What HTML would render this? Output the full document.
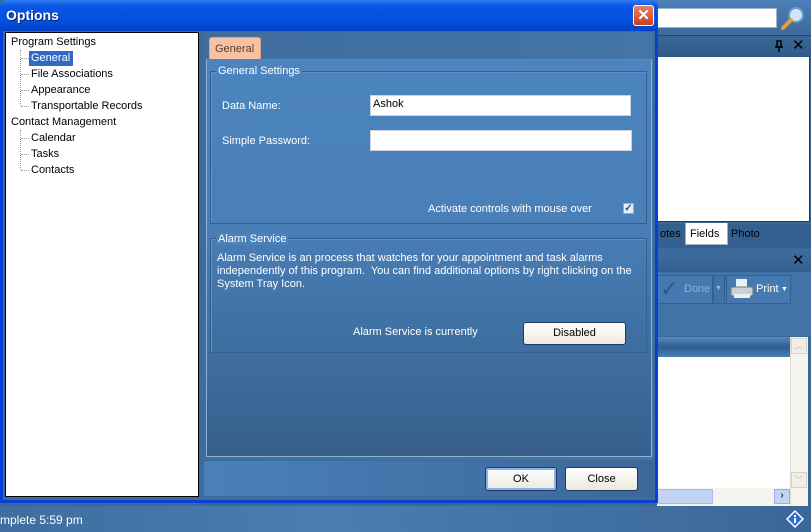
<!DOCTYPE html>
<html><head><meta charset="utf-8"><style>
*{margin:0;padding:0;box-sizing:border-box}
body{width:811px;height:532px;overflow:hidden;position:relative;background:#3c6898;font-family:"Liberation Sans",sans-serif;font-size:11px;color:#fff}
.a{position:absolute}
.t{position:absolute;white-space:nowrap}
</style></head><body>
<div class="a" style="left:640px;top:0;width:171px;height:35px;background:linear-gradient(#4b7fb6,#3d6a9c)"></div>
<div class="a" style="left:655px;top:8px;width:122px;height:20px;background:#fff;border:1px solid #9fb5cf"></div>
<svg class="a" style="left:780px;top:5px" width="26" height="26"><circle cx="16" cy="10" r="7" fill="#cfe6f7" stroke="#6a9cc8" stroke-width="2"/><line x1="11" y1="15" x2="3" y2="23" stroke="#e0a040" stroke-width="4" stroke-linecap="round"/></svg>
<div class="a" style="left:657px;top:35px;width:154px;height:22px;background:linear-gradient(#3a6796,#2f5a88);border-top:1px solid #25466b"></div>
<svg class="a" style="left:774px;top:40px" width="10" height="12"><rect x="3" y="1" width="4" height="6" fill="none" stroke="#000" stroke-width="1.5"/><line x1="1" y1="7" x2="9" y2="7" stroke="#000" stroke-width="1.5"/><line x1="5" y1="7" x2="5" y2="12" stroke="#000" stroke-width="1.5"/></svg>
<div class="t" style="left:792px;top:36px;font-size:15px;color:#000">✕</div>
<div class="a" style="left:657px;top:57px;width:153px;height:165px;background:#fff;border-right:1px solid #1f3a5c;border-bottom:1px solid #1f3a5c"></div>
<div class="a" style="left:657px;top:224px;width:154px;height:24px;background:#34608f"></div>
<div class="t" style="left:660px;top:228px;color:#000">otes</div>
<div class="a" style="left:685px;top:223px;width:43px;height:22px;background:#fff;border:1px solid #a0b0c0;border-top:none"></div>
<div class="t" style="left:690px;top:228px;color:#000">Fields</div>
<div class="t" style="left:731px;top:228px;color:#000">Photo</div>
<div class="a" style="left:657px;top:250px;width:154px;height:22px;background:linear-gradient(#3e6c9e,#34608f)"></div>
<div class="t" style="left:792px;top:251px;font-size:15px;color:#000">✕</div>
<div class="a" style="left:657px;top:272px;width:154px;height:64px;background:#4173a6"></div>
<div class="a" style="left:657px;top:275px;width:56px;height:29px;border:1px solid #35618f;background:#4679af"></div>
<div class="t" style="left:660px;top:276px;font-size:22px;color:#2d5a88">✓</div>
<div class="t" style="left:684px;top:283px;color:#8fb0d2">Done</div>
<div class="a" style="left:713px;top:275px;width:12px;height:29px;border:1px solid #35618f"></div>
<div class="t" style="left:715px;top:285px;font-size:7px;color:#9fbad7">▼</div>
<div class="a" style="left:726px;top:275px;width:65px;height:29px;border:1px solid #35618f;background:#4679af"></div>
<svg class="a" style="left:729px;top:277px" width="26" height="24"><rect x="7" y="2" width="11" height="9" fill="#e8f0ff"/><rect x="2" y="10" width="22" height="9" rx="2" fill="#c8d0d8" stroke="#777"/><rect x="5" y="17" width="16" height="4" fill="#eee"/></svg>
<div class="t" style="left:756px;top:283px">Print</div>
<div class="t" style="left:781px;top:286px;font-size:7px">▼</div>
<div class="a" style="left:657px;top:337px;width:133px;height:20px;background:linear-gradient(#5589c0,#2f5e92 50%,#4a7fb5)"></div>
<div class="a" style="left:657px;top:357px;width:133px;height:131px;background:#fff"></div>
<div class="a" style="left:790px;top:337px;width:18px;height:171px;background:#f4f3ee;border-left:1px solid #e0ddd0"></div>
<div class="a" style="left:791px;top:338px;width:16px;height:16px;background:#f0eee6;border:1px solid #d8d4c4;color:#c0c0c0;font-size:9px;text-align:center">︿</div>
<div class="a" style="left:791px;top:472px;width:16px;height:16px;background:#f0eee6;border:1px solid #d8d4c4;color:#c0c0c0;font-size:9px;text-align:center">﹀</div>
<div class="a" style="left:657px;top:488px;width:133px;height:18px;background:#f4f3ee"></div>
<div class="a" style="left:657px;top:489px;width:56px;height:15px;background:#c3d3f3;border:1px solid #a8bde8"></div>
<div class="a" style="left:774px;top:489px;width:16px;height:15px;background:#c3d3f3;border:1px solid #98aee0;color:#335;font-size:10px;text-align:center;font-weight:bold">›</div>
<div class="a" style="left:0;top:506px;width:811px;height:26px;background:linear-gradient(90deg,#3f6d9f,#4a7db2 40%,#3a6797)"></div>
<div class="t" style="left:0;top:513px;font-size:12px">mplete 5:59 pm</div>
<svg class="a" style="left:786px;top:510px" width="18" height="18"><path d="M9 1 17 9 9 17 1 9Z" fill="#2a6fd6" stroke="#fff" stroke-width="1.5"/><rect x="8" y="8" width="2" height="5" fill="#fff"/><rect x="8" y="5" width="2" height="2" fill="#fff"/></svg>
<div class="a" style="left:0;top:0;width:658px;height:503px;background:#0a3fd6;border-radius:6px 6px 0 0"></div>
<div class="a" style="left:0;top:0;width:658px;height:31px;background:linear-gradient(#2f7df5,#0a56e4 20%,#0350dc 70%,#0241c8);border-radius:6px 6px 0 0"></div>
<div class="t" style="left:6px;top:7px;font-size:14px;font-weight:bold;text-shadow:1px 1px #0a2470">Options</div>
<div class="a" style="left:633px;top:5px;width:21px;height:21px;background:linear-gradient(#e8806a,#cc3e1c);border:1px solid #fff;border-radius:3px;color:#fff;font-size:15px;text-align:center;line-height:19px;font-weight:bold">✕</div>
<div class="a" style="left:3px;top:31px;width:652px;height:469px;background:#3c6b9c"></div>
<div class="a" style="left:5px;top:32px;width:194px;height:465px;background:#fff;border:1px solid #000"></div>
<div class="t" style="left:11px;top:36px;color:#000">Program Settings</div>
<div class="a" style="left:20px;top:50px;width:0;height:56px;border-left:1px dotted #999"></div>
<div class="a" style="left:20px;top:130px;width:0;height:40px;border-left:1px dotted #999"></div>
<div class="a" style="left:21px;top:58px;width:8px;border-top:1px dotted #999"></div>
<div class="a" style="left:21px;top:74px;width:8px;border-top:1px dotted #999"></div>
<div class="a" style="left:21px;top:90px;width:8px;border-top:1px dotted #999"></div>
<div class="a" style="left:21px;top:106px;width:8px;border-top:1px dotted #999"></div>
<div class="a" style="left:21px;top:138px;width:8px;border-top:1px dotted #999"></div>
<div class="a" style="left:21px;top:154px;width:8px;border-top:1px dotted #999"></div>
<div class="a" style="left:21px;top:170px;width:8px;border-top:1px dotted #999"></div>
<div class="a" style="left:29px;top:51px;width:44px;height:15px;background:#316ac5"></div>
<div class="t" style="left:31px;top:52px">General</div>
<div class="t" style="left:31px;top:68px;color:#000">File Associations</div>
<div class="t" style="left:31px;top:84px;color:#000">Appearance</div>
<div class="t" style="left:31px;top:100px;color:#000">Transportable Records</div>
<div class="t" style="left:11px;top:116px;color:#000">Contact Management</div>
<div class="t" style="left:31px;top:132px;color:#000">Calendar</div>
<div class="t" style="left:31px;top:148px;color:#000">Tasks</div>
<div class="t" style="left:31px;top:164px;color:#000">Contacts</div>
<div class="a" style="left:204px;top:32px;width:449px;height:428px;background:linear-gradient(90deg,#3f6d9f,#4475a8)"></div>
<div class="a" style="left:209px;top:37px;width:52px;height:23px;background:#f7c2a4;border:1px solid #e6a27c;border-bottom:none;border-radius:3px 3px 0 0"></div>
<div class="t" style="left:215px;top:43px;color:#5a3b2a">General</div>
<div class="a" style="left:206px;top:59px;width:446px;height:398px;background:linear-gradient(#4b84be,#4a7fb8 40%,#3a6897 85%,#375f8c);border:1px solid #8fb0d0;border-top-color:#5a88b8"></div>
<div class="a" style="left:210px;top:71px;width:437px;height:153px;border:1px solid #35608e;box-shadow:inset 1px 1px 0 #5e90c4"></div>
<div class="t" style="left:216px;top:65px;padding:0 2px;background:#4b84be">General Settings</div>
<div class="t" style="left:222px;top:100px">Data Name:</div>
<div class="a" style="left:370px;top:95px;width:261px;height:21px;background:#fff;border:1px solid #c8d4e0"></div>
<div class="t" style="left:373px;top:98px;color:#000">Ashok</div>
<div class="t" style="left:222px;top:135px">Simple Password:</div>
<div class="a" style="left:370px;top:130px;width:262px;height:21px;background:#fff;border:1px solid #c8d4e0"></div>
<div class="t" style="left:428px;top:203px">Activate controls with mouse over</div>
<div class="a" style="left:623px;top:203px;width:11px;height:11px;background:#e8ecf4;border:1px solid #9ab;color:#24489a;font-size:10px;line-height:9px;text-align:center;font-weight:bold">✓</div>
<div class="a" style="left:210px;top:238px;width:437px;height:115px;border:1px solid #35608e;box-shadow:inset 1px 1px 0 #5e90c4"></div>
<div class="t" style="left:216px;top:233px;padding:0 2px;background:#4a82bb">Alarm Service</div>
<div class="t" style="left:217px;top:252px;line-height:13px;white-space:normal;width:425px">Alarm Service is an process that watches for your appointment and task alarms independently of this program.&nbsp; You can find additional options by right clicking on the System Tray Icon.</div>
<div class="t" style="left:353px;top:326px">Alarm Service is currently</div>
<div class="a" style="left:523px;top:322px;width:103px;height:23px;background:linear-gradient(#fff,#ece9df);border:1px solid #1c3a64;border-radius:3px;color:#000;text-align:center;line-height:21px">Disabled</div>
<div class="a" style="left:204px;top:461px;width:449px;height:35px;background:linear-gradient(90deg,#4a80ba,#3b6898)"></div>
<div class="a" style="left:485px;top:467px;width:72px;height:24px;background:linear-gradient(#fff,#ece9df);border:1px solid #1c3a64;box-shadow:inset 0 0 0 2px #8cb0ec;border-radius:3px;color:#000;text-align:center;line-height:22px">OK</div>
<div class="a" style="left:565px;top:467px;width:73px;height:24px;background:linear-gradient(#fff,#ece9df);border:1px solid #1c3a64;border-radius:3px;color:#000;text-align:center;line-height:22px">Close</div>
</body></html>
